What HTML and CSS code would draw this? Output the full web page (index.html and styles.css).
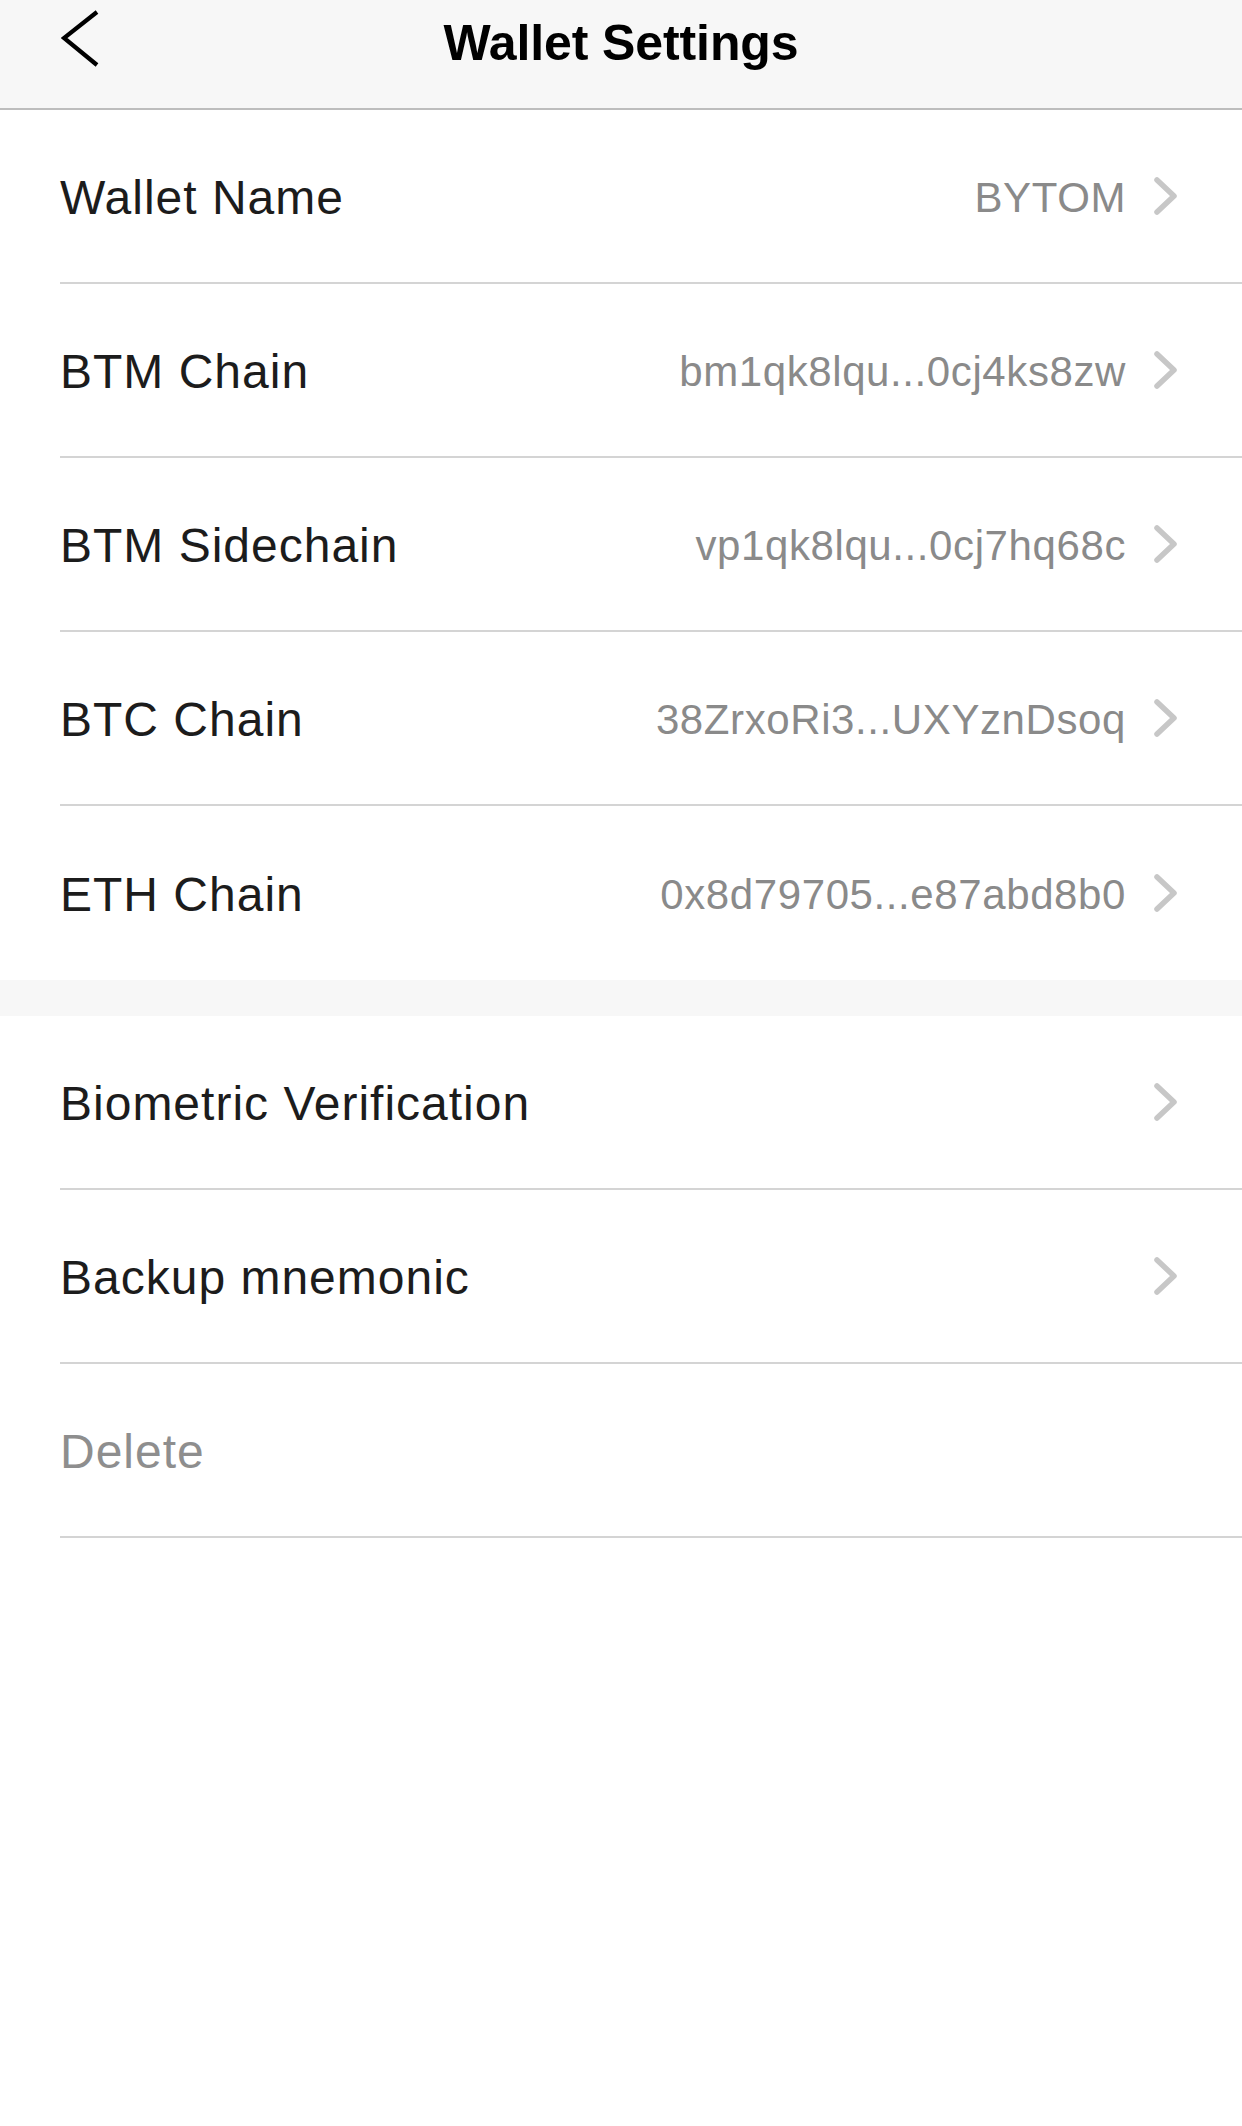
FILE: index.html
```html
<!DOCTYPE html>
<html lang="en">
<head>
<meta charset="utf-8">
<title>Wallet Settings</title>
<link rel="stylesheet" href="styles.css">
</head>
<body>
<div class="page">
  <header class="navbar">
    <div class="nav-side">
      <svg class="back-icon" width="40" height="58" viewBox="0 0 40 58">
        <polyline points="36,2 3,28 36,55" fill="none" stroke="#000" stroke-width="4.2" stroke-linejoin="miter"/>
      </svg>
    </div>
    <h1 class="nav-title">Wallet Settings</h1>
    <div class="nav-side"></div>
  </header>

  <section class="group">
    <div class="row">
      <span class="label">Wallet Name</span>
      <span class="value">BYTOM</span>
      <svg class="chev" width="24" height="38" viewBox="0 0 24 38"><polyline points="3,3 20,19 3,35" fill="none" stroke="#c7c7c7" stroke-width="5.5" stroke-linecap="round" stroke-linejoin="round"/></svg>
    </div>
    <div class="row">
      <span class="label">BTM Chain</span>
      <span class="value">bm1qk8lqu...0cj4ks8zw</span>
      <svg class="chev" width="24" height="38" viewBox="0 0 24 38"><polyline points="3,3 20,19 3,35" fill="none" stroke="#c7c7c7" stroke-width="5.5" stroke-linecap="round" stroke-linejoin="round"/></svg>
    </div>
    <div class="row">
      <span class="label">BTM Sidechain</span>
      <span class="value">vp1qk8lqu...0cj7hq68c</span>
      <svg class="chev" width="24" height="38" viewBox="0 0 24 38"><polyline points="3,3 20,19 3,35" fill="none" stroke="#c7c7c7" stroke-width="5.5" stroke-linecap="round" stroke-linejoin="round"/></svg>
    </div>
    <div class="row">
      <span class="label">BTC Chain</span>
      <span class="value">38ZrxoRi3...UXYznDsoq</span>
      <svg class="chev" width="24" height="38" viewBox="0 0 24 38"><polyline points="3,3 20,19 3,35" fill="none" stroke="#c7c7c7" stroke-width="5.5" stroke-linecap="round" stroke-linejoin="round"/></svg>
    </div>
    <div class="row row-last">
      <span class="label">ETH Chain</span>
      <span class="value">0x8d79705...e87abd8b0</span>
      <svg class="chev" width="24" height="38" viewBox="0 0 24 38"><polyline points="3,3 20,19 3,35" fill="none" stroke="#c7c7c7" stroke-width="5.5" stroke-linecap="round" stroke-linejoin="round"/></svg>
    </div>
  </section>

  <div class="gap"></div>

  <section class="group">
    <div class="row">
      <span class="label">Biometric Verification</span>
      <svg class="chev" width="24" height="38" viewBox="0 0 24 38"><polyline points="3,3 20,19 3,35" fill="none" stroke="#c7c7c7" stroke-width="5.5" stroke-linecap="round" stroke-linejoin="round"/></svg>
    </div>
    <div class="row">
      <span class="label">Backup mnemonic</span>
      <svg class="chev" width="24" height="38" viewBox="0 0 24 38"><polyline points="3,3 20,19 3,35" fill="none" stroke="#c7c7c7" stroke-width="5.5" stroke-linecap="round" stroke-linejoin="round"/></svg>
    </div>
    <div class="row">
      <span class="label label-muted">Delete</span>
    </div>
  </section>
</div>
</body>
</html>
```

FILE: styles.css
```css
* {
  box-sizing: border-box;
}

html, body {
  margin: 0;
  padding: 0;
  background: #ffffff;
}

body {
  font-family: "Liberation Sans", Arial, sans-serif;
  color: #1c1c1c;
}

.page {
  width: 1242px;
  min-height: 2126px;
  background: #ffffff;
}

.navbar {
  display: grid;
  grid-template-columns: 1fr auto 1fr;
  align-items: center;
  height: 110px;
  padding-bottom: 22px;
  background: #f7f7f7;
  border-bottom: 2px solid #bdbdbd;
}

.nav-side {
  display: flex;
  align-items: center;
  padding-left: 61px;
}

.back-icon {
  display: block;
  margin-top: -8px;
}

.nav-title {
  margin: 0;
  font-size: 50px;
  line-height: 1;
  font-weight: 700;
  color: #000000;
  letter-spacing: -0.1px;
}

.group {
  padding-left: 60px;
  background: #ffffff;
}

.row {
  display: flex;
  align-items: center;
  height: 174px;
  padding-right: 64px;
  border-bottom: 2px solid #d4d4d4;
}

.row-last {
  border-bottom: none;
}

.label {
  flex: 1;
  font-size: 48px;
  line-height: 1;
  color: #1c1c1c;
  padding-top: 4px;
  letter-spacing: 1px;
}

.label-muted {
  color: #8e8e8e;
}

.value {
  font-size: 42px;
  line-height: 1;
  color: #8a8a8a;
  margin-right: 28px;
  padding-top: 4px;
  letter-spacing: 0.6px;
}

.chev {
  display: block;
  flex: none;
}

.gap {
  height: 36px;
  background: #f7f7f7;
}
```
